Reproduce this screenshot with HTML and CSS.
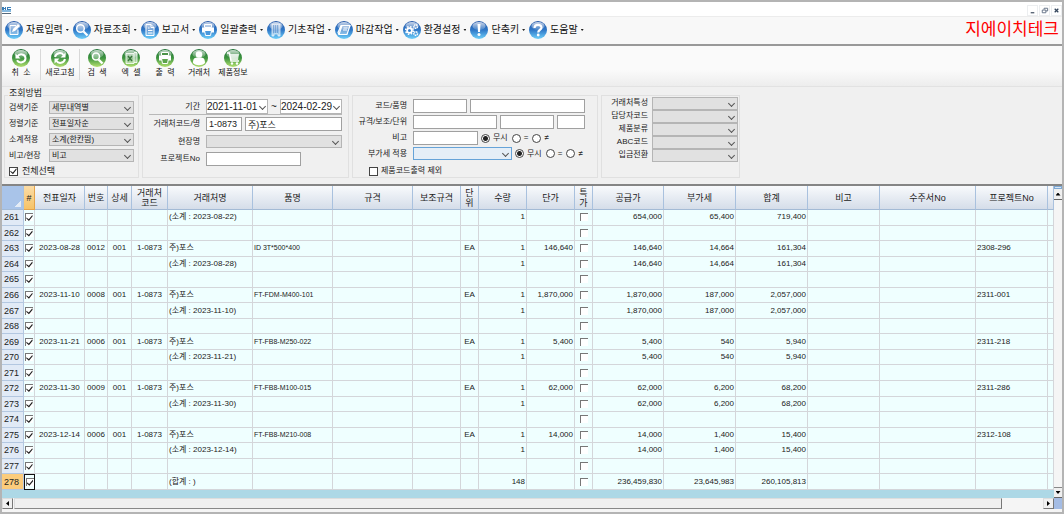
FILE: index.html
```html
<!DOCTYPE html>
<html lang="ko">
<head>
<meta charset="utf-8">
<title>지에이치테크</title>
<link rel="stylesheet" href="styles.css">
</head>
<body>
<svg class="defs" aria-hidden="true">
  <defs>
    <linearGradient id="blue" x1="0" y1="0" x2="0" y2="1"><stop offset="0" stop-color="#2457a8"/><stop offset=".5" stop-color="#2f78c8"/><stop offset="1" stop-color="#6fd0fa"/></linearGradient>
    <linearGradient id="green" x1="0" y1="0" x2="0" y2="1"><stop offset="0" stop-color="#1d6f33"/><stop offset=".5" stop-color="#3d9440"/><stop offset="1" stop-color="#b4e070"/></linearGradient>
    <linearGradient id="gloss" x1="0" y1="0" x2="0" y2="1"><stop offset="0" stop-color="#fff" stop-opacity=".75"/><stop offset="1" stop-color="#fff" stop-opacity=".1"/></linearGradient>
    <symbol id="ball" viewBox="0 0 18 18"><circle cx="9" cy="9" r="9"/><ellipse cx="9" cy="5" rx="6.6" ry="4" fill="url(#gloss)"/></symbol>
  </defs>
</svg>
<div class="window">
  <header class="titlebar">
    <svg class="app-mark" viewBox="0 0 9 7"><path fill="#3c7fb8" d="M0 0h2v1h1v-1h1v3h-1v-1h-1v1h-2zM5 0h4v1h-3v1h3v1h-4z"/><path fill="#85b9df" d="M0 3h9v2h-9z"/><path fill="#56697a" d="M0 6h9v1h-9z"/></svg>
    <div class="caption-buttons">
      <button aria-label="최소화"><svg viewBox="0 0 10 10"><path d="M3 7.5h4" stroke="#3c4a5c" stroke-width="1.3"/></svg></button>
      <button aria-label="이전 크기로"><svg viewBox="0 0 10 10"><path d="M4.5 4v-1.500h4v3h-2M2.500 4.500h4v3h-4z" fill="none" stroke="#5c6b80"/></svg></button>
      <button aria-label="닫기"><svg viewBox="0 0 10 10"><path d="M3 3l4 4M7 3l-4 4" stroke="#34465c" stroke-width="1.4"/></svg></button>
    </div>
  </header>

  <nav class="menubar">
    <button class="menu"><svg viewBox="0 0 18 18"><use href="#ball" fill="url(#blue)"/><path d="M11 4.500h-6v9h8v-5" fill="#ffffff55" stroke="#fff"/><path d="M7 11l1-3 5-5 2 2-5 5z" fill="#fff"/></svg>자료입력<i></i></button>
    <button class="menu"><svg viewBox="0 0 18 18"><use href="#ball" fill="url(#blue)"/><circle cx="7.500" cy="7.500" r="3.800" fill="#ffffff55" stroke="#fff" stroke-width="1.500"/><path d="M10.500 10.500l4 4" stroke="#fff" stroke-width="2.200"/></svg>자료조회<i></i></button>
    <button class="menu"><svg viewBox="0 0 18 18"><use href="#ball" fill="url(#blue)"/><path d="M5 3.500h5l3 3v8h-8zM10 3.500v3h3M7 9.500h4.500M7 12h4.500M7 7h1.500" fill="#ffffff44" stroke="#fff"/></svg>보고서<i></i></button>
    <button class="menu"><svg viewBox="0 0 18 18"><use href="#ball" fill="url(#blue)"/><path d="M5.500 3.500h7v3h-7z" fill="#ffffff66" stroke="#fff"/><path d="M3 6.500h12v5h-12z" fill="#fff"/><path d="M5.500 9.500h7l-1 5h-5z" fill="#4a98dc" stroke="#fff"/></svg>일괄출력<i></i></button>
    <button class="menu"><svg viewBox="0 0 18 18"><use href="#ball" fill="url(#blue)"/><path d="M5 3h8v12h-2v-2h-4v2h-2z" fill="#ffffff77" stroke="#ffffffaa"/><path d="M6 5h6M6 7h6M6 9h6M6 11h6" stroke="#4d86c8" stroke-dasharray="1 1"/></svg>기초작업<i></i></button>
    <button class="menu"><svg viewBox="0 0 18 18"><use href="#ball" fill="url(#blue)"/><path d="M7 4.500h8l-3 9h-8zM4 13.500l-1-2 3-7h2M8.500 7h4M8 9h4" fill="#ffffff55" stroke="#fff" stroke-width="1.200"/></svg>마감작업<i></i></button>
    <button class="menu"><svg viewBox="0 0 18 18"><use href="#ball" fill="url(#blue)"/><g fill="none" stroke="#fff"><circle cx="6.500" cy="9.500" r="2.400" stroke-width="1.800"/><circle cx="6.500" cy="9.500" r="3.800" stroke-width="1.600" stroke-dasharray="1.500 1.500"/><circle cx="12.700" cy="5.500" r="1.800" stroke-width="1.500" stroke-dasharray="1.400 .6"/><circle cx="12.700" cy="12.500" r="1.800" stroke-width="1.500" stroke-dasharray="1.400 .6"/></g></svg>환경설정<i></i></button>
    <button class="menu"><svg viewBox="0 0 18 18"><use href="#ball" fill="url(#blue)"/><path d="M7.500 3h3l-.5 8h-2z" fill="#fff"/><circle cx="9" cy="13.500" r="1.500" fill="#fff"/></svg>단축키<i></i></button>
    <button class="menu"><svg viewBox="0 0 18 18"><use href="#ball" fill="url(#blue)"/><path d="M5.500 7c0-4 7-4 7-.5 0 2.500-3.300 2-3.300 5" fill="none" stroke="#fff" stroke-width="2.200"/><circle cx="9.200" cy="14" r="1.400" fill="#fff"/></svg>도움말<i></i></button>
    <strong class="company">지에이치테크</strong>
  </nav>

  <div class="toolbar">
    <button class="tool first"><svg viewBox="0 0 18 18"><use href="#ball" fill="url(#green)"/><path d="M5.500 7.500c2-3.500 8-2.500 8 1.800 0 4.500-6.500 5.500-8.500 2" fill="none" stroke="#fff" stroke-width="2"/><path d="M3.500 4.500v5h5z" fill="#fff"/></svg>취&nbsp;&nbsp;소</button>
    <button class="tool wide"><svg viewBox="0 0 18 18"><use href="#ball" fill="url(#green)"/><path d="M4 8c1-4.500 6.500-5 8.500-2M14 10c-1 4.500-6.500 5-8.500 2" fill="none" stroke="#fff" stroke-width="2"/><path d="M14.500 3.500v5h-5zM3.500 14.500v-5h5z" fill="#fff"/></svg>새로고침</button>
    <button class="tool"><svg viewBox="0 0 18 18"><use href="#ball" fill="url(#green)"/><circle cx="8" cy="7.500" r="3.500" fill="#ffffff44" stroke="#fff" stroke-width="1.600"/><path d="M10.500 10.500l4 4" stroke="#fff" stroke-width="2.400"/></svg>검&nbsp;&nbsp;색</button>
    <button class="tool"><svg viewBox="0 0 18 18"><use href="#ball" fill="url(#green)"/><path d="M4 4.500h8v10h-8zM12 3.500h3v10h-3" fill="#ffffff77" stroke="#ffffffcc"/><path d="M6 7l4 5M10 7l-4 5" stroke="#37753b" stroke-width="1.400"/></svg>엑&nbsp;&nbsp;셀</button>
    <button class="tool"><svg viewBox="0 0 18 18"><use href="#ball" fill="url(#green)"/><path d="M5.500 3.500h7v3h-7z" fill="#4c9448" stroke="#fff"/><path d="M3 6.500h12v5h-12z" fill="#fff"/><path d="M5.500 9.500h7l-1 5h-5z" fill="#5ca44c" stroke="#fff"/></svg>출&nbsp;&nbsp;력</button>
    <button class="tool"><svg viewBox="0 0 18 18"><use href="#ball" fill="url(#green)"/><circle cx="9" cy="5.500" r="3.300" fill="#fff"/><path d="M3 14c0-6 3-5.500 6-5.500s6-.5 6 5.500c-3 3-9 3-12 0z" fill="#fff"/></svg>거래처</button>
    <button class="tool"><svg viewBox="0 0 18 18"><use href="#ball" fill="url(#green)"/><path d="M3 4h2.500l1.500 8h8" fill="none" stroke="#fff" stroke-width="1.500"/><path d="M6 5h9l-1 6h-7z" fill="#ffffffcc"/><circle cx="8" cy="14.500" r="1.200" fill="#fff"/><circle cx="13" cy="14.500" r="1.200" fill="#fff"/></svg>제품정보</button>
  </div>

  <form class="filters">
    <fieldset class="group basics">
      <legend>조회방법</legend>
      <label for="f1">검색기준</label><span class="drop"><select id="f1"><option>세부내역별</option></select></span>
      <label for="f2">정렬기준</label><span class="drop"><select id="f2"><option>전표일자순</option></select></span>
      <label for="f3">소계적용</label><span class="drop"><select id="f3"><option>소계(한칸띔)</option></select></span>
      <label for="f4">비고/현장</label><span class="drop"><select id="f4"><option>비고</option></select></span>
      <label class="check all"><input type="checkbox" checked>전체선택</label>
    </fieldset>

    <div class="group period">
      <div class="line ruled"><label for="p1">기간</label><span class="drop white"><select id="p1"><option>2021-11-01</option></select></span><span class="tilde">~</span><span class="drop white"><select aria-label="종료일"><option>2024-02-29</option></select></span></div>
      <div class="line"><label for="p2">거래처코드/명</label><input class="code" id="p2" value="1-0873"><input class="grow" aria-label="거래처명" value="주)포스"></div>
      <div class="line"><label for="p3">현장명</label><span class="drop"><select id="p3"><option></option></select></span></div>
      <div class="line"><label for="p4">프로젝트No</label><input class="project" id="p4"></div>
    </div>

    <div class="group goods">
      <div class="line"><label for="g1">코드/품명</label><input class="w54" id="g1"><input class="grow" aria-label="품명"></div>
      <div class="line"><label for="g2">규격/보조/단위</label><input class="grow" id="g2"><input class="w54" aria-label="보조"><input class="w28" aria-label="단위"></div>
      <div class="line"><label for="g3">비고</label><input class="w65" id="g3">
        <span class="radios"><label><input type="radio" name="r1" checked>무시</label><label><input type="radio" name="r1">=</label><label><input type="radio" name="r1">≠</label></span></div>
      <div class="line"><label for="g4">부가세 적용</label><span class="drop focus"><select id="g4"><option></option></select></span>
        <span class="radios"><label><input type="radio" name="r2" checked>무시</label><label><input type="radio" name="r2">=</label><label><input type="radio" name="r2">≠</label></span></div>
      <label class="check"><input type="checkbox">제품코드출력 제외</label>
    </div>

    <div class="group traits">
      <label for="t1">거래처특성</label><span class="drop"><select id="t1"><option></option></select></span>
      <label for="t2">담당자코드</label><span class="drop"><select id="t2"><option></option></select></span>
      <label for="t3">제품분류</label><span class="drop"><select id="t3"><option></option></select></span>
      <label for="t4">ABC코드</label><span class="drop"><select id="t4"><option></option></select></span>
      <label for="t5">입금전환</label><span class="drop"><select id="t5"><option></option></select></span>
    </div>
  </form>

  <main class="sheet">
    <div class="pane">
      <table>
        <colgroup><col class="c22"><col class="c11"><col class="c50"><col class="c23"><col class="c24"><col class="c36"><col class="c85"><col class="c80"><col class="c80"><col class="c48"><col class="c18"><col class="c48"><col class="c48"><col class="c18"><col class="c71"><col class="c72"><col class="c72"><col class="c72"><col class="c96"><col class="c72"><col></colgroup>
        <thead><tr><th class="corner"></th><th class="hash">#</th><th>전표일자</th><th>번호</th><th>상세</th><th>거래처<br>코드</th><th>거래처명</th><th>품명</th><th>규격</th><th>보조규격</th><th>단<br>위</th><th>수량</th><th>단가</th><th>특<br>가</th><th>공급가</th><th>부가세</th><th>합계</th><th>비고</th><th>수주서No</th><th>프로젝트No</th><th></th></tr></thead>
        <tbody id="rows"></tbody>
      </table>
    </div>
    <div class="vbar"><span class="split"></span><button aria-label="위로"><i class="up"></i></button><span class="track"></span><button aria-label="아래로"><i class="down"></i></button></div>
    <div class="hbar"><button aria-label="왼쪽으로"><i class="left"></i></button><span class="track"><span class="thumb"></span></span><button aria-label="오른쪽으로"><i class="right"></i></button></div>
    <div class="grip"></div>
  </main>
</div>
<script src="grid.js"></script>
</body>
</html>
```

FILE: styles.css
```css
* { box-sizing: border-box; }
body {
  margin: 0;
  font: 8px/12px "Liberation Sans", "Noto Sans CJK KR", sans-serif;
  color: #222;
}
button, input, select { font: inherit; color: inherit; margin: 0; padding: 0; border: 0; background: none; border-radius: 0; }
.defs { position: absolute; width: 0; height: 0; }
.window {
  display: flex;
  flex-direction: column;
  min-height: 100vh;
  border: 2px solid #b4b4b4;
  background: #f0f0f0;
}

.titlebar { display: flex; justify-content: space-between; height: 14px; background: #fff; }
.app-mark { width: 9px; height: 7px; margin-top: 5px; }
.caption-buttons { display: flex; gap: 1px; padding-top: 3px; }
.caption-buttons button { width: 11px; height: 11px; border: 1px solid #eceef0; }
.caption-buttons svg { display: block; width: 9px; height: 9px; }

.menubar {
  display: flex;
  align-items: center;
  height: 30px;
  padding: 0 3px 1px;
  border-top: 1px solid #ececec;
  border-bottom: 2px solid #999;
  background: #f8f8f8;
}
.menu { display: flex; align-items: center; gap: 3px; padding-right: 4px; font-size: 10px; color: #111; white-space: nowrap; }
.menu svg { width: 18px; height: 18px; }
.menu i { width: 3px; height: 2px; background: #222; clip-path: polygon(0 0, 100% 0, 50% 100%); }
.company { margin-left: auto; font-size: 17px; line-height: 24px; font-weight: 400; color: #f00; }

.toolbar {
  display: flex;
  align-items: flex-start;
  height: 41px;
  padding: 3px 0 0;
  border-bottom: 1px solid #e2e2e2;
  background: linear-gradient(#fafafa 60%, #ededed);
}
.tool { display: flex; flex-direction: column; align-items: center; width: 34px; height: 31px; line-height: 10px; color: #111; white-space: nowrap; }
.tool svg { width: 18px; height: 18px; margin-bottom: 1px; }
.tool.first { width: 39px; border-right: 1px solid #d8d8d8; }
.tool.wide { width: 39px; border-right: 1px solid #d8d8d8; }

.filters { display: flex; gap: 3px; height: 99px; padding: 8px 2px 6px; border-bottom: 2px solid #858585; }
.group { margin: 0; border: 1px solid #e0e0e0; min-width: 0; }
.basics { position: relative; display: grid; grid-template-columns: 40px 85px; align-content: start; align-items: center; row-gap: 3px; width: 135px; padding: 5px 4px 0; }
.basics legend { position: absolute; top: -9px; left: 3px; padding: 0 1px; font-size: 9px; background: #f0f0f0; }
.basics .all { grid-column: 1 / -1; font-size: 9px; }
.check { display: flex; align-items: center; gap: 4px; }
.drop { position: relative; display: flex; height: 13px; border: 1px solid #b5b5b5; background: #e1e1e1; }
.drop select { appearance: none; width: 100%; padding: 0 10px 0 2px; line-height: 11px; outline: 0; }
.drop::after {
  content: "";
  position: absolute;
  top: 3px;
  right: 3px;
  width: 4px;
  height: 4px;
  border: solid #555;
  border-width: 0 1px 1px 0;
  transform: rotate(45deg);
  pointer-events: none;
}
.drop.white { height: 15px; background: #fff; font-size: 10px; }
.drop.white select { padding: 0; }
.drop.white::after { top: 4px; right: 2px; }
.drop.focus { border-color: #66a3d8; background: #e5eef7; }
.line { display: flex; align-items: center; gap: 3px; }
.line > label { flex: none; text-align: right; }
.line input:not([type]) { min-width: 0; height: 14px; padding: 0 2px; border: 1px solid #a0a0a0; background: #fff; }
.line .grow { flex: 1; }

.period { width: 207px; padding: 3px 6px 0; }
.period .line > label { width: 51px; margin-right: 3px; }
.period .line { padding-bottom: 4px; }
.period .ruled { padding-bottom: 0; margin-bottom: 2px; border-bottom: 1px solid #b8b8b8; }
.period .drop { flex: 1; }
.period .code { width: 36px; padding: 0 3px; font-size: 9px; }
.period .grow { font-size: 9px; }
.period .project { width: 95px; }
.tilde { font-size: 10px; }

.goods { width: 246px; padding: 3px 12px 0 3px; }
.goods .line { padding-bottom: 2px; }
.goods .line > label { width: 51px; margin-right: 3px; }
.goods .drop { width: 99px; }
.goods .check { padding: 3px 0 0 13px; gap: 3px; }
.goods .w54 { width: 54px; }
.goods .w65 { width: 65px; }
.goods .w28 { width: 28px; }
.radios { display: flex; gap: 4px; }
.radios label { display: flex; align-items: center; gap: 3px; }

.traits { display: grid; grid-template-columns: 46px 86px; column-gap: 4px; align-content: start; text-align: right; width: 139px; padding-top: 1px; }

input[type="checkbox"], input[type="radio"] { appearance: none; flex: none; display: grid; width: 9px; height: 9px; border: 1px solid #444; background: #fff; }
input[type="radio"] { border-radius: 50%; }
input[type="radio"]:checked { background: radial-gradient(#222 0 2px, #fff 3px); }
input[type="checkbox"]:checked::after { content: ""; background: #222; clip-path: polygon(5% 45%, 40% 70%, 90% 10%, 95% 30%, 42% 95%, 5% 62%); }

.sheet { flex: 1; display: grid; grid-template-columns: minmax(0, 1fr) 8px; grid-template-rows: 1fr 14px; background: #f4f4f4; }
.pane { background: #add8e6; }
table { width: 100%; height: 304px; table-layout: fixed; border-collapse: separate; border-spacing: 0; }
th { height: 24px; padding: 0; border-right: 1px solid #a9c1de; border-bottom: 1px solid #a3bad5; background: linear-gradient(#f8fafc, #d5dde9); font-size: 9px; line-height: 10px; font-weight: 400; white-space: nowrap; }
th.corner { background: linear-gradient(135deg, transparent 50%, #e4ecf6 50%) calc(100% - 2px) calc(100% - 2px) / 6px 6px no-repeat, #a9c4e9; }
th.hash { background: linear-gradient(#fbdca6, #f6c368); border-color: #e4a34b; }
td { height: 15px; padding: 0 1px; border-right: 1px solid #d4d6da; border-bottom: 1px solid #d4d6da; background: #efffff; font-size: 8px; line-height: 12px; white-space: nowrap; overflow: hidden; }
td.num { background: #e1eaf6; border-color: #b3c7e0; font-size: 9px; padding: 0 2px; }
td.c { text-align: center; }
td.r { text-align: right; }
td.name { padding-left: 1px; }
td.item { padding-left: 1px; font-size: 7px; }
td input[type="checkbox"] { width: 8px; height: 8px; margin: 0 auto; border-width: 1px 0 0 1px; border-color: #777; }
td.tick { padding: 0; }
tr.current .num { background: #fbcc7c; }
tr.current .tick.on { border: 1px solid #111; }
.c22 { width: 22px; } .c11 { width: 11px; } .c50 { width: 50px; } .c23 { width: 23px; } .c24 { width: 24px; } .c36 { width: 36px; } .c85 { width: 85px; } .c80 { width: 80px; } .c48 { width: 48px; } .c18 { width: 18px; } .c71 { width: 71px; } .c72 { width: 72px; } .c96 { width: 96px; }

.vbar { display: flex; flex-direction: column; background: #f5f5f5; }
.vbar .split { height: 3px; border: 1px solid #7fa9d4; background: #d6e6f6; }
.vbar button { height: 11px; border-bottom: 1px solid #666; background: #f0f0f0; }
.vbar .track { flex: 1; }
.vbar button, .hbar button { display: grid; place-items: center; }
.vbar button:last-child { border-top: 1px solid #888; }
.hbar { display: flex; padding: 0 0 3px; background: #f5f5f5; }
.hbar button { width: 11px; border: 1px solid #ddd; border-right-color: #777; border-bottom-color: #777; background: #f0f0f0; }
.hbar .track { flex: 1; display: flex; padding-left: 1px; }
.hbar .thumb { width: 96%; border: 1px solid #ddd; border-right-color: #777; border-bottom-color: #888; background: #f0f0f0; }
.grip { background: #a4bce4; margin-bottom: 3px; }
.up, .down { width: 5px; height: 3px; background: #000; clip-path: polygon(0 100%, 50% 0, 100% 100%); }
.down { clip-path: polygon(0 0, 100% 0, 50% 100%); }
.left, .right { width: 3px; height: 5px; background: #000; clip-path: polygon(100% 0, 100% 100%, 0 50%); }
.right { clip-path: polygon(0 0, 0 100%, 100% 50%); }
```

FILE: grid.js
```js
const item = (date, no, name, price, supply, tax, total, project) =>
  ({ date, no, seq: '001', code: '1-0873', who: '주)포스', name, unit: 'EA', qty: '1', price, supply, tax, total, project });
const sum = (date, supply, tax, total) => ({ who: `(소계 : ${date})`, qty: '1', supply, tax, total });

const data = [
  sum('2023-08-22', '654,000', '65,400', '719,400'),
  {},
  item('2023-08-28', '0012', 'ID 3T*500*400', '146,640', '146,640', '14,664', '161,304', '2308-296'),
  sum('2023-08-28', '146,640', '14,664', '161,304'),
  {},
  item('2023-11-10', '0008', 'FT-FDM-M400-101', '1,870,000', '1,870,000', '187,000', '2,057,000', '2311-001'),
  sum('2023-11-10', '1,870,000', '187,000', '2,057,000'),
  {},
  item('2023-11-21', '0006', 'FT-FB8-M250-022', '5,400', '5,400', '540', '5,940', '2311-218'),
  sum('2023-11-21', '5,400', '540', '5,940'),
  {},
  item('2023-11-30', '0009', 'FT-FB8-M100-015', '62,000', '62,000', '6,200', '68,200', '2311-286'),
  sum('2023-11-30', '62,000', '6,200', '68,200'),
  {},
  item('2023-12-14', '0006', 'FT-FB8-M210-008', '14,000', '14,000', '1,400', '15,400', '2312-108'),
  sum('2023-12-14', '14,000', '1,400', '15,400'),
  {},
  { who: '(합계 : )', qty: '148', supply: '236,459,830', tax: '23,645,983', total: '260,105,813' }
];

const columns = [
  ['date', 'c'], ['no', 'c'], ['seq', 'c'], ['code', 'c'], ['who', 'name'], ['name', 'item'], ['spec', ''], ['aux', ''],
  ['unit', 'c'], ['qty', 'r'], ['price', 'r'], ['special', 'tick'], ['supply', 'r'], ['tax', 'r'], ['total', 'r'],
  ['note', ''], ['order', ''], ['project', ''], ['rest', '']
];

document.getElementById('rows').innerHTML = data.map((row, i) => {
  const n = 261 + i;
  const cells = columns.map(([key, cls]) => key === 'special'
    ? `<td class="tick"><input type="checkbox" aria-label="특가 ${n}"></td>`
    : `<td class="${cls}">${row[key] || ''}</td>`).join('');
  return `<tr class="${n === 278 ? 'current' : ''}"><td class="num">${n}</td><td class="tick on"><input type="checkbox" checked aria-label="선택 ${n}"></td>${cells}</tr>`;
}).join('');
```
